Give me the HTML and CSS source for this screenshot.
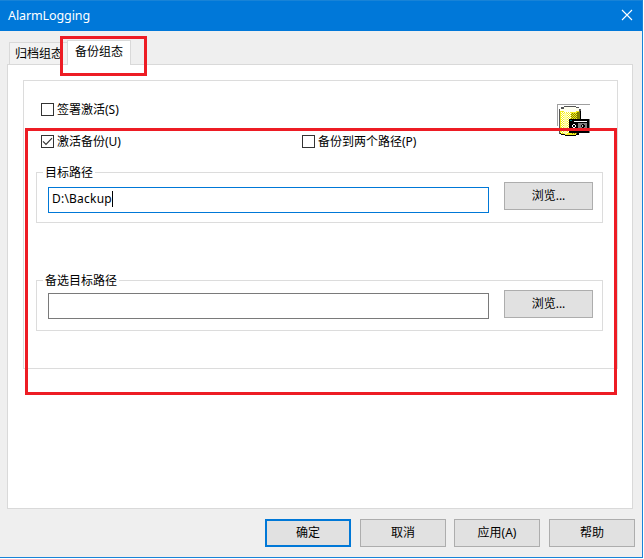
FILE: index.html
```html
<!DOCTYPE html>
<html lang="zh-CN">
<head>
<meta charset="utf-8">
<title>AlarmLogging</title>
<link rel="stylesheet" href="styles.css">
</head>
<body>
<div class="window">
  <header class="titlebar">
    <span class="title">AlarmLogging</span>
    <svg class="close" width="10" height="10" viewBox="0 0 10 10"><path d="M0 0L10 10M10 0L0 10" stroke="#fff" stroke-width="1.1"/></svg>
  </header>
  <nav class="tabs">
    <span class="tab">归档组态</span>
    <span class="tab active">备份组态</span>
  </nav>
  <main class="page">
    <section class="frame">
      <div class="check-row first">
        <label class="check"><i class="box"></i>签署激活(S)</label>
        <svg class="db-icon" width="34" height="34" viewBox="0 0 34 34" shape-rendering="crispEdges">
          <defs>
            <pattern id="light" width="2" height="2" patternUnits="userSpaceOnUse"><path fill="#fff" d="M0 0h1v1H0zM1 1h1v1H1z"/></pattern>
            <pattern id="shade" width="2" height="2" patternUnits="userSpaceOnUse"><path fill="#808000" d="M0 0h1v1H0zM1 1h1v1H1z"/></pattern>
          </defs>
          <path fill="#a0a0a0" d="M0 0h33v1H1v21H0z"/>
          <path fill="#555" d="M7 2h12v1h3v2h2v24h-2v2h-3v1H8v-1H4v-1H2V5h2V3h3z"/>
          <path fill="#000" d="M23 7h1v22h-2v2h-3v1H8v-1H4v-1H3v-1h20z"/>
          <path fill="#f4ee20" d="M7 3h12v1h3v25h-3v2H8v-1H4v-1H3V5h4z"/>
          <path fill="url(#light)" d="M4 8h10v21H4z"/>
          <path fill="#fffff0" d="M7 3h12v1h3v3h-3v1H7V7H3V5h4z"/>
          <path fill="#fffda0" d="M7 9h3v21H7z"/>
          <path fill="url(#shade)" d="M14 9h6v21h-6z"/>
          <path fill="#808000" d="M20 8h3v21h-3z"/>
          <path fill="#000" d="M12 15h20v14H12z"/>
          <path fill="#808080" d="M32 15h1v14h-1zM21 19h9v6h-9z"/>
          <path fill="#fff" d="M17 17h13v1H17zM16 20h2v1h1v2h-1v1h-2v-1h-1v-2h1z"/>
          <path fill="#008080" d="M13 16h2v1h-2z"/>
          <path fill="#000" d="M25 20h2v1h1v2h-1v1h-2v-1h-1v-2h1zM16 21h2v2h-2z"/>
          <path fill="#c0c0c0" d="M25 21h1v2h-1z"/>
        </svg>
      </div>
      <div class="check-row second">
        <label class="check"><i class="box"><svg width="11" height="11" viewBox="0 0 11 11"><path d="M1 5.3L4 8.3L10 2.2" fill="none" stroke="#333" stroke-width="1.2"/></svg></i>激活备份(U)</label>
        <label class="check other"><i class="box"></i>备份到两个路径(P)</label>
      </div>
      <div class="group">
        <span class="legend">目标路径</span>
        <div class="field focused">D:\Backup<i class="caret"></i></div>
        <button class="button browse">浏览...</button>
      </div>
      <div class="group alternate">
        <span class="legend">备选目标路径</span>
        <div class="field"></div>
        <button class="button browse">浏览...</button>
      </div>
    </section>
  </main>
  <footer class="actions">
    <button class="button default">确定</button>
    <button class="button">取消</button>
    <button class="button apply">应用(A)</button>
    <button class="button">帮助</button>
  </footer>
  <div class="mark mark-tab"></div>
  <div class="mark mark-options"></div>
</div>
</body>
</html>
```

FILE: styles.css
```css
* { box-sizing: border-box; }
body {
  margin: 0;
  background: #fff;
  font: 12px/16px "Noto Sans", "Noto Sans CJK SC", sans-serif;
  color: #000;
}
.window {
  position: relative;
  width: 643px;
  height: 558px;
  background: #efefef;
  border-right: 1px solid #1883d7;
  border-bottom: 1px solid #1883d7;
}
.titlebar {
  display: flex;
  align-items: center;
  justify-content: space-between;
  height: 31px;
  padding: 0 10px 0 8px;
  background: #0078d9;
  border-top: 1px solid #1883d7;
  color: #fff;
}
.title { font-size: 12.5px; letter-spacing: -0.1px; }
.close { overflow: visible; margin-top: -2px; }
.tabs {
  display: flex;
  align-items: flex-end;
  height: 33px;
  padding-left: 9px;
}
.tab {
  width: 58px;
  height: 22px;
  padding: 3px 0 0 5px;
  border: 1px solid #d9d9d9;
  border-width: 1px 0 0 1px;
  background: #f2f2f2;
  white-space: nowrap;
}
.tab.active {
  position: relative;
  z-index: 1;
  width: 64px;
  height: 25px;
  margin-bottom: -1px;
  padding: 3px 0 0 7px;
  border-width: 1px 1px 0;
  background: #fff;
}
.page {
  width: 626px;
  height: 445px;
  margin-left: 7px;
  padding: 15px;
  background: #fff;
  border: 1px solid #d9d9d9;
}
.frame {
  width: 595px;
  height: 289px;
  padding-left: 12px;
  border: 1px solid #dcdcdc;
}
.check-row { display: flex; padding-left: 5px; }
.first { height: 54px; padding-top: 22px; }
.second { height: 37px; }
.check { display: flex; height: 13px; line-height: 14px; width: 261px; }
.box { width: 13px; height: 13px; margin-right: 3px; border: 1px solid #333; background: #fff; }
.box svg { display: block; }
.db-icon { margin: 1px 0 0 255px; flex: none; }
.group {
  display: flex;
  position: relative;
  width: 567px;
  height: 51px;
  border: 1px solid #dcdcdc;
}
.alternate { margin-top: 57px; }
.legend {
  position: absolute;
  left: 6px;
  top: -8px;
  padding: 0 2px;
  background: #fff;
}
.field {
  display: flex;
  align-items: center;
  width: 441px;
  height: 26px;
  margin: 14px 0 0 11px;
  padding: 0 3px 2px;
  border: 1px solid #7a7a7a;
  background: #fff;
}
.alternate .field { margin-top: 12px; }
.focused { border-color: #0078d7; letter-spacing: 0.22px; }
.caret { width: 1px; height: 16px; background: #000; }
.button {
  width: 86px;
  height: 28px;
  padding: 0;
  border: 1px solid #adadad;
  background: #e1e1e1;
  font: inherit;
  color: #000;
}
.browse { width: 89px; margin: 9px 0 0 15px; }
.actions {
  display: flex;
  gap: 9px;
  padding: 10px 0 0 265px;
}
.default { border: 2px solid #0078d7; }
.apply { margin-left: -1px; }
.mark { position: absolute; z-index: 2; border: 3px solid #ed1c24; }
.mark-tab { left: 60px; top: 36px; width: 87px; height: 40px; }
.mark-options { left: 25px; top: 128px; width: 592px; height: 267px; }
```
